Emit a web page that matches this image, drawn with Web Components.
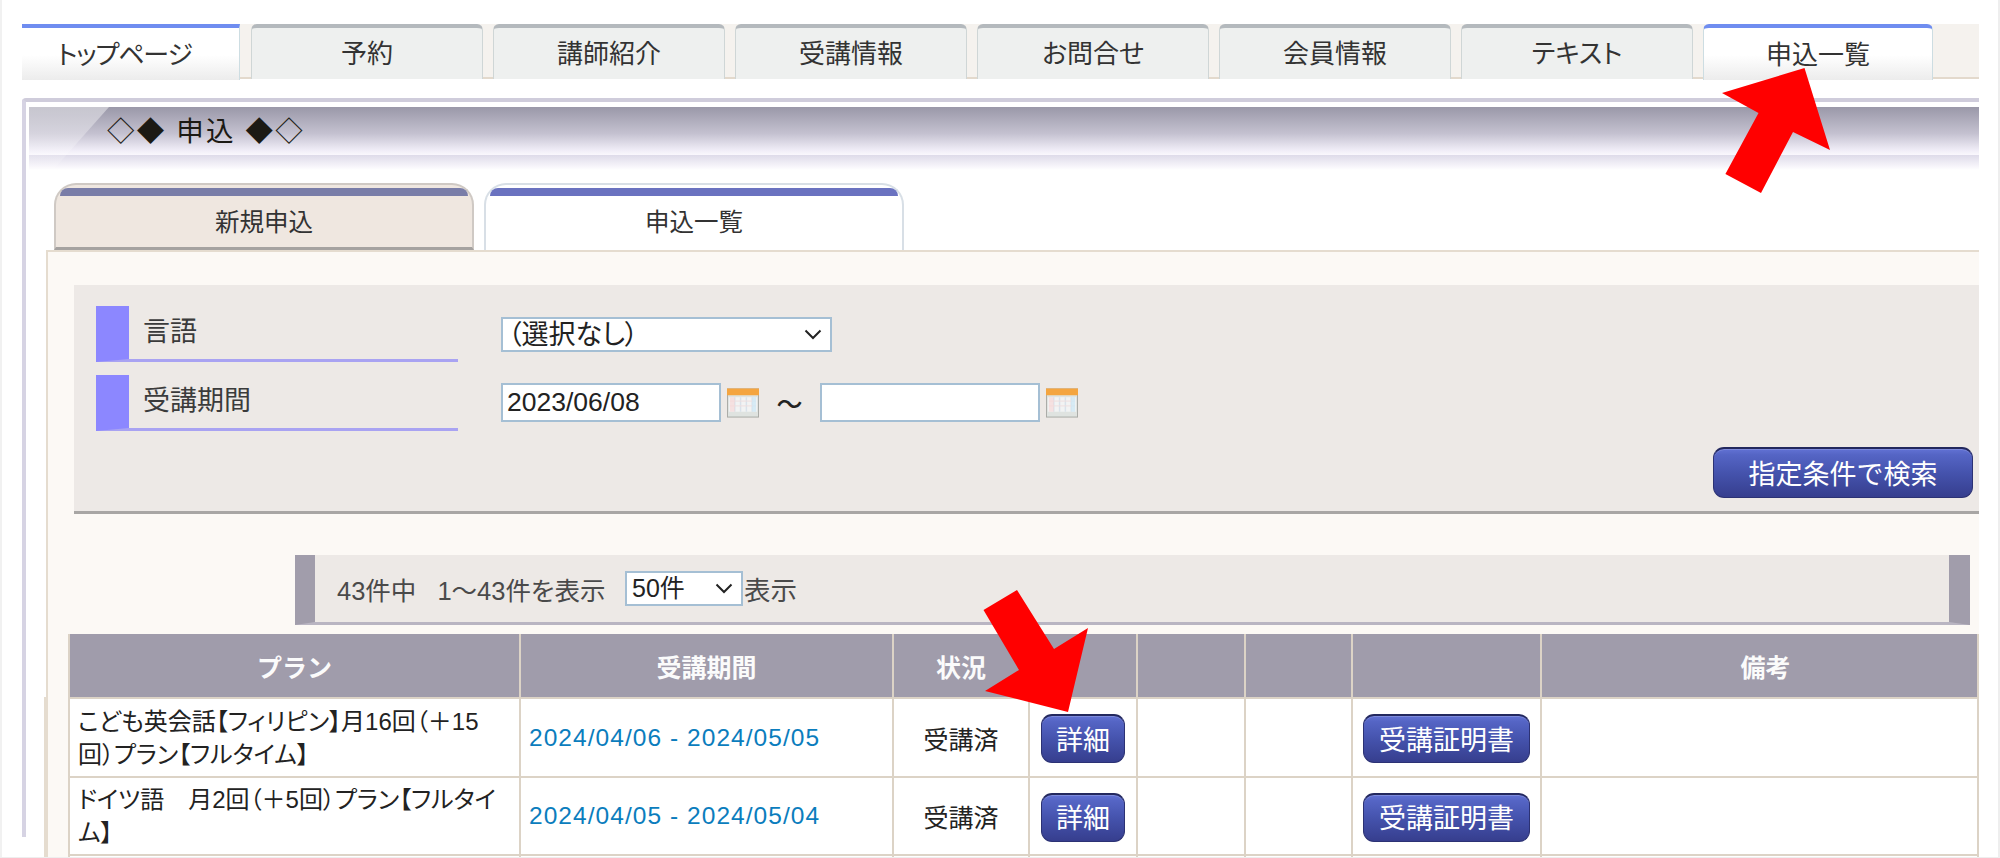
<!DOCTYPE html>
<html lang="ja">
<head>
<meta charset="utf-8">
<title>申込一覧</title>
<style>
  html, body { margin: 0; height: 858px; overflow: hidden; background: #fff; }
  body { font-family: "Liberation Sans", "Noto Sans CJK JP", sans-serif; color: #222; }
</style>
</head>
<body>
<app-page>
  <nav-tabs>
    <nav-tab active first>トップページ</nav-tab>
    <nav-tab>予約</nav-tab>
    <nav-tab>講師紹介</nav-tab>
    <nav-tab>受講情報</nav-tab>
    <nav-tab>お問合せ</nav-tab>
    <nav-tab>会員情報</nav-tab>
    <nav-tab>テキスト</nav-tab>
    <nav-tab active>申込一覧</nav-tab>
  </nav-tabs>
  <main-panel>
    <panel-title>◇◆ 申込 ◆◇</panel-title>
    <sub-tabs>
      <sub-tab>新規申込</sub-tab>
      <sub-tab active>申込一覧</sub-tab>
    </sub-tabs>
    <content-box>
      <search-box>
        <search-field label="言語">
          <select-box text="（選択なし）" width="331" size="27"></select-box>
        </search-field>
        <search-field label="受講期間">
          <date-range from="2023/06/08"></date-range>
        </search-field>
        <blue-button slot="action" wide>指定条件で検索</blue-button>
      </search-box>
      <pager-bar></pager-bar>
      <plan-table></plan-table>
    </content-box>
  </main-panel>
  <red-arrows></red-arrows>
</app-page>

<script>
const JP = '"Liberation Sans", "Noto Sans CJK JP", sans-serif';

class AppPage extends HTMLElement {
    constructor() {
        super();
        this.attachShadow({ mode: "open" }).innerHTML = `
        <style>
        :host {
            display: block;
            position: relative;
            box-sizing: border-box;
            width: 2000px;
            height: 858px;
            padding: 24px 19px 0 22px;
            overflow: hidden;
            border-right: 2px solid #eee;
            border-bottom: 1px solid #eee;
            box-shadow: inset 2px 0 0 #f1f1f1;
        }
        </style>
        <slot></slot>`;
    }
}

class NavTabs extends HTMLElement {
    constructor() {
        super();
        this.attachShadow({ mode: "open" }).innerHTML = `
        <style>
        :host {
            display: flex;
            gap: 10px;
            height: 55px;
            box-sizing: border-box;
            background: #f5f2ee;
            border-bottom: 2px solid #e3d9cc;
        }
        </style>
        <slot></slot>`;
    }
}

class NavTab extends HTMLElement {
    constructor() {
        super();
        this.attachShadow({ mode: "open" }).innerHTML = `
        <style>
        :host {
            display: flex;
            align-items: center;
            justify-content: center;
            box-sizing: border-box;
            flex: 0 0 232px;
            height: 55px;
            padding-bottom: 4px;
            font-size: 26px;
            color: #333;
            background: #eef0ef;
            border: solid #cfd6d6;
            border-width: 4px 1px 0;
            border-top-color: #b4b9bd;
            border-radius: 6px 6px 0 0;
            font-feature-settings: "palt";
        }
        :host([active]) {
            height: 56px;
            flex-basis: 230px;
            background: linear-gradient(#fff 52%, #ececec);
            border-color: #6f8df0 #cddde2 #fff;
        }
        :host([first]) {
            flex-basis: 218px;
            margin-right: 1px;
            padding-right: 12px;
            border-left: 0;
            border-radius: 0;
            letter-spacing: -1.2px;
        }
        </style>
        <slot></slot>`;
    }
}

class MainPanel extends HTMLElement {
    constructor() {
        super();
        this.attachShadow({ mode: "open" }).innerHTML = `
        <style>
        :host {
            display: block;
            box-sizing: border-box;
            height: 739px;
            margin-top: 19px;
            border-left: 4px solid #d6d3e3;
            border-top: 4px solid #cfccdb;
            border-radius: 4px 0 0 0;
        }
        </style>
        <slot></slot>`;
    }
}

class PanelTitle extends HTMLElement {
    constructor() {
        super();
        this.attachShadow({ mode: "open" }).innerHTML = `
        <style>
        :host {
            display: block;
            position: relative;
            box-sizing: border-box;
            height: 68px;
            padding: 5px 0 0 3px;
        }
        .band {
            position: relative;
            height: 48px;
            padding-left: 78px;
            line-height: 50px;
            font-size: 27.5px;
            letter-spacing: 2.2px;
            color: #1c1a14;
            background: linear-gradient(#9a98a8, #c4c1d0 55%, #f0edf7 90%, #faf8fd);
        }
        .fade {
            height: 15px;
            background: linear-gradient(#dedbe9, #f5f3f9 70%, #fff);
        }
        .shine {
            position: absolute;
            left: 3px;
            top: 5px;
            width: 80px;
            height: 63px;
            background: linear-gradient(rgba(255,255,255,.45), rgba(255,255,255,.1));
            clip-path: polygon(0 0, 100% 0, 30% 100%, 0 100%);
        }
        </style>
        <div class="band"><slot></slot></div>
        <div class="fade"></div>
        <div class="shine"></div>`;
    }
}

class SubTabs extends HTMLElement {
    constructor() {
        super();
        this.attachShadow({ mode: "open" }).innerHTML = `
        <style>
        :host {
            display: flex;
            gap: 10px;
            height: 67px;
            margin: 13px 0 0 28px;
        }
        </style>
        <slot></slot>`;
    }
}

class SubTab extends HTMLElement {
    constructor() {
        super();
        this.attachShadow({ mode: "open" }).innerHTML = `
        <style>
        :host {
            display: block;
            box-sizing: border-box;
            width: 420px;
            height: 67px;
            padding: 3px 4px 0;
            font-size: 24.5px;
            color: #333;
            background: #efe7e0;
            border: 2px solid #cfc9c4;
            border-bottom: 3px solid #a5a2a0;
            border-radius: 22px 22px 0 0;
        }
        :host([active]) {
            height: 67px;
            background: #fff;
            border-bottom: 0;
            border-color: #d8dfe6;
        }
        .bar {
            height: 8px;
            background: #797da8;
            border-radius: 14px 14px 0 0;
        }
        :host([active]) .bar { background: #6a72c0; }
        .label {
            height: 48px;
            display: flex;
            align-items: center;
            justify-content: center;
        }
        </style>
        <div class="bar"></div>
        <div class="label"><slot></slot></div>`;
    }
}

class ContentBox extends HTMLElement {
    constructor() {
        super();
        this.attachShadow({ mode: "open" }).innerHTML = `
        <style>
        :host {
            display: block;
            box-sizing: border-box;
            height: 620px;
            margin-left: 20px;
            padding: 33px 0 0 0;
            background: #fcf9f5;
            border: solid #e5dccf;
            border-width: 2px 0 0 2px;
            position: relative;
        }
        </style>
        <slot></slot>`;
    }
}

class SearchBox extends HTMLElement {
    constructor() {
        super();
        this.attachShadow({ mode: "open" }).innerHTML = `
        <style>
        :host {
            display: block;
            box-sizing: border-box;
            height: 229px;
            margin-left: 26px;
            padding: 21px 6px 0 22px;
            background: #ede9e6;
            border-bottom: 3px solid #a8a6a4;
        }
        .rows { display: flex; flex-direction: column; gap: 13px; }
        .action { display: flex; justify-content: flex-end; margin-top: 16px; }
        </style>
        <div class="rows"><slot></slot></div>
        <div class="action"><slot name="action"></slot></div>`;
    }
}

class SearchField extends HTMLElement {
    constructor() {
        super();
        this.attachShadow({ mode: "open" }).innerHTML = `
        <style>
        :host { display: flex; align-items: flex-start; }
        .label {
            flex: 0 0 362px;
            box-sizing: border-box;
            height: 56px;
            display: flex;
            align-items: center;
            padding: 0 0 6px 14px;
            font-size: 27px;
            color: #3b3b3b;
            border-left: 33px solid #8c87ff;
            border-bottom: 3px solid #a9a3f2;
        }
        .value { margin: 11px 0 0 43px; }
        </style>
        <div class="label">${this.getAttribute("label")}</div>
        <div class="value"><slot></slot></div>`;
    }
}

class SelectBox extends HTMLElement {
    constructor() {
        super();
        const width = this.getAttribute("width");
        const text = this.getAttribute("text");
        const size = this.getAttribute("size");
        this.attachShadow({ mode: "open" }).innerHTML = `
        <style>
        :host { display: block; position: relative; width: ${width}px; }
        select {
            appearance: none;
            display: block;
            box-sizing: border-box;
            width: 100%;
            height: 35px;
            padding: 0 0 0 5px;
            font: ${size}px ${JP};
            font-feature-settings: "palt";
            color: #222;
            background: #fff;
            border: 2px solid #a5bfd4;
            border-radius: 0;
        }
        svg { position: absolute; right: 10px; top: 12px; }
        </style>
        <select><option>${text}</option></select>
        <svg width="18" height="11" viewBox="0 0 18 11"><path d="M1.5 1.5 9 9l7.5-7.5" fill="none" stroke="#222" stroke-width="2"/></svg>`;
    }
}

class CalendarIcon extends HTMLElement {
    constructor() {
        super();
        this.attachShadow({ mode: "open" }).innerHTML = `
        <style>
        :host { display: block; width: 32px; height: 30px; }
        svg { display: block; }
        </style>
        <svg width="32" height="30" viewBox="0 0 33 30">
            <rect x="0.5" y="0.5" width="32" height="29" fill="#dfe3e0" stroke="#a9aaa6"/>
            <rect x="0" y="0" width="33" height="7" fill="#f4a540"/>
            <rect x="2" y="9" width="29" height="15" fill="#f2f3f3"/>
            <path d="M8 9v15M14 9v15M20 9v15M26 9v15" stroke="#d9e2ea" stroke-width="1.5"/>
            <path d="M3 13h27M3 18h27" stroke="#eedede" stroke-width="1"/>
            <rect x="3" y="9" width="5" height="15" fill="#f6d9d9" opacity=".7"/>
            <rect x="26" y="9" width="4" height="15" fill="#cfe9f5" opacity=".8"/>
        </svg>`;
    }
}

class DateRange extends HTMLElement {
    constructor() {
        super();
        this.attachShadow({ mode: "open" }).innerHTML = `
        <style>
        :host { display: flex; align-items: center; margin-top: -3px; height: 39px; }
        input {
            box-sizing: border-box;
            width: 220px;
            height: 39px;
            padding: 0 4px;
            font: 26.5px ${JP};
            color: #222;
            background: #fff;
            border: 2px solid #a5bfd4;
            border-radius: 0;
            outline: 0;
        }
        calendar-icon { margin-left: 6px; }
        .tilde { width: 61px; text-align: center; font-size: 26px; font-weight: 500; color: #222; }
        </style>
        <input value="${this.getAttribute("from")}"><calendar-icon></calendar-icon>
        <span class="tilde">〜</span>
        <input value=""><calendar-icon></calendar-icon>`;
    }
}

class BlueButton extends HTMLElement {
    constructor() {
        super();
        this.attachShadow({ mode: "open" }).innerHTML = `
        <style>
        :host {
            display: inline-flex;
            align-items: center;
            justify-content: center;
            box-sizing: border-box;
            height: 49px;
            padding: 0 0 2px;
            width: 84px;
            font-size: 27px;
            color: #fff;
            background: linear-gradient(#6272d4 0, #5565c5 12%, #4553ad 50%, #363e8e);
            border: 1px solid #2c3274;
            border-top: 2px solid #23285e;
            border-radius: 11px;
            box-shadow: inset 0 1px 0 rgba(255,255,255,.18);
        }
        :host([wide]) { width: 260px; height: 51px; }
        :host([medium]) { width: 167px; }
        </style>
        <slot></slot>`;
    }
}

class PagerBar extends HTMLElement {
    constructor() {
        super();
        this.attachShadow({ mode: "open" }).innerHTML = `
        <style>
        :host {
            display: flex;
            align-items: center;
            box-sizing: border-box;
            width: 1675px;
            height: 70px;
            margin: 41px 0 0 247px;
            padding: 0 0 1px 22px;
            font-size: 25.5px;
            font-feature-settings: "palt";
            color: #4a4a4a;
            background: #ede9e6;
            border: solid #a19dab;
            border-width: 0 21px 3px 20px;
            border-bottom-color: #b9b5c2;
        }
        .count { width: 288px; white-space: nowrap; }
        .count span { margin-left: 21px; }
        .unit { margin-left: 1px; font-size: 26.5px; }
        </style>
        <span class="count">43件中<span>1〜43件を表示</span></span>
        <select-box text="50件" width="118" size="25"></select-box>
        <span class="unit">表示</span>`;
    }
}

class PlanTable extends HTMLElement {
    constructor() {
        super();
        const rows = [
            { plan: "こども英会話【フィリピン】月16回（＋15回）プラン【フルタイム】", term: "2024/04/06 - 2024/05/05", h: 79 },
            { plan: "ドイツ語　月2回（＋5回）プラン【フルタイム】", term: "2024/04/05 - 2024/05/04", h: 78 }
        ];
        const body = rows.map((r) => `
            <tr style="height:${r.h}px">
                <td class="plan">${r.plan}</td>
                <td class="term">${r.term}</td>
                <td class="mid">受講済</td>
                <td class="mid"><blue-button>詳細</blue-button></td>
                <td></td>
                <td></td>
                <td class="mid"><blue-button medium>受講証明書</blue-button></td>
                <td></td>
            </tr>`).join("");
        this.attachShadow({ mode: "open" }).innerHTML = `
        <style>
        :host {
            display: block;
            margin: 9px 0 0 -4px;
            padding-left: 24px;
            background: linear-gradient(#e5dccf, #e5dccf) no-repeat 0 63px / 2px 100%;
        }
        table {
            table-layout: fixed;
            width: 1911px;
            border-collapse: collapse;
            font-size: 25px;
            color: #222;
            background: #fff;
        }
        th, td { border: 2px solid #dcd3c6; padding: 0; }
        th {
            height: 63px;
            color: #fbfbfb;
            background: #a09cab;
            font-size: 25px;
            font-weight: 700;
            border-top: 0;
        }
        th.note { padding-left: 12px; }
        td.plan {
            padding: 0 14px 0 8px;
            line-height: 33px;
            font-size: 24px;
            font-feature-settings: "palt";
            word-break: break-all;
        }
        td.term {
            padding-left: 8px;
            color: #0b7dbd;
            letter-spacing: 1.05px;
            white-space: nowrap;
            font-size: 24.5px;
        }
        td.mid { text-align: center; }
        .empty td { height: 40px; }
        blue-button { vertical-align: middle; margin-top: 2px; }
        </style>
        <table>
            <colgroup>
                <col style="width:451px"><col style="width:373px"><col style="width:136px">
                <col style="width:108px"><col style="width:108px"><col style="width:107px">
                <col style="width:189px"><col>
            </colgroup>
            <tr><th>プラン</th><th>受講期間</th><th>状況</th><th></th><th></th><th></th><th></th><th class="note">備考</th></tr>
            ${body}
            <tr class="empty"><td></td><td></td><td></td><td></td><td></td><td></td><td></td><td></td></tr>
        </table>`;
    }
}

class RedArrows extends HTMLElement {
    constructor() {
        super();
        this.attachShadow({ mode: "open" }).innerHTML = `
        <style>
        :host { position: absolute; left: 0; top: 0; width: 2000px; height: 858px; pointer-events: none; }
        svg { display: block; }
        </style>
        <svg width="2000" height="858" viewBox="0 0 2000 858">
            <polygon fill="#ff0000" points="1804.5,68 1722,93 1758.5,113 1725.4,174 1761,193 1793,132 1830,150"/>
            <polygon fill="#ff0000" points="1017,590 983.5,610 1019,670 985,691 1068,712 1088,628 1054,649"/>
        </svg>`;
    }
}

customElements.define("app-page", AppPage);
customElements.define("nav-tabs", NavTabs);
customElements.define("nav-tab", NavTab);
customElements.define("main-panel", MainPanel);
customElements.define("panel-title", PanelTitle);
customElements.define("sub-tabs", SubTabs);
customElements.define("sub-tab", SubTab);
customElements.define("content-box", ContentBox);
customElements.define("search-box", SearchBox);
customElements.define("search-field", SearchField);
customElements.define("select-box", SelectBox);
customElements.define("calendar-icon", CalendarIcon);
customElements.define("date-range", DateRange);
customElements.define("blue-button", BlueButton);
customElements.define("pager-bar", PagerBar);
customElements.define("plan-table", PlanTable);
customElements.define("red-arrows", RedArrows);
</script>
</body>
</html>
